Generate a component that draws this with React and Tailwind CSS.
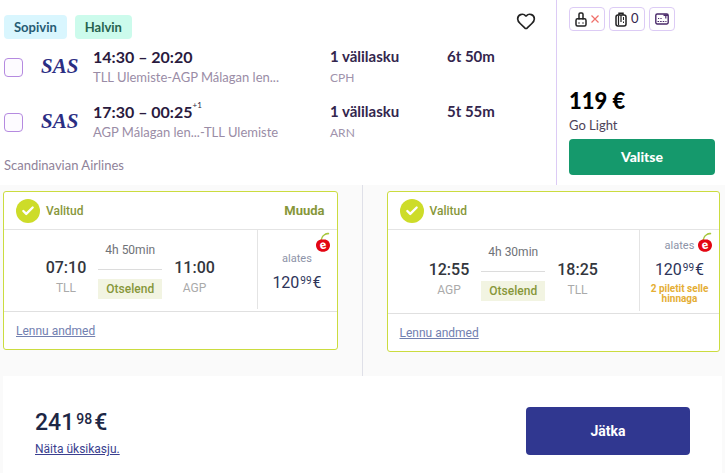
import React from 'react';
import { Check, Heart } from 'lucide-react';

const legs = [
  { id: 'out', time: '14:30 – 20:20', plus: '', route: 'TLL Ulemiste-AGP Málagan len...', stops: '1 välilasku', via: 'CPH', duration: '6t 50m' },
  { id: 'back', time: '17:30 – 00:25', plus: '+1', route: 'AGP Málagan len...-TLL Ulemiste', stops: '1 välilasku', via: 'ARN', duration: '5t 55m' },
];

const BackpackIcon = () => (
  <svg className="w-3 h-[15px]" viewBox="0 0 12 15" fill="none" stroke="#222" strokeWidth="1.5">
    <path d="M4 7.5V2.2Q4 1 5.2 1h1.6Q8 1 8 2.2V7.5" />
    <path d="M4 6.8H2.6Q1 6.8 1 8.4V12.5Q1 14 2.5 14h7Q11 14 11 12.5V8.4Q11 6.8 9.4 6.8H8" />
    <path d="M4 6.8h4" />
    <path d="M3.2 11h1.6M7.2 11h1.6" strokeWidth="1.2" />
  </svg>
);

const SuitcaseIcon = () => (
  <svg className="w-3 h-[15px]" viewBox="0 0 12 15" fill="none" stroke="#222" strokeWidth="1.5">
    <path d="M4 3V1.2h4V3" />
    <rect x="1" y="3" width="10" height="11" rx="2" />
    <path d="M3.5 3.5v9.5M6 3v7" strokeWidth="1.2" />
    <path d="M8.5 5v3M8.5 9.5v1.5" strokeWidth="1" />
  </svg>
);

const CardIcon = () => (
  <svg className="w-3.5 h-3" viewBox="0 0 14 12" fill="none" stroke="#4a2a6a" strokeWidth="1.4">
    <rect x=".8" y="1" width="12.4" height="10" rx="1.4" />
    <path d="M8.5 2.2h4.500" strokeWidth="1.6" />
    <path d="M10.8 3v2.600" strokeWidth="1.2" />
    <path d="M3 5.500h1.200M5.400 5.500h1.200" strokeWidth="1" />
    <path d="M2.500 8.500h9" strokeWidth="1" strokeDasharray="1.600 1" />
  </svg>
);

const Cherry = () => (
  <svg className="absolute top-0.5 right-1.5 w-4 h-[21px]" viewBox="0 0 16 21" fill="none">
    <path d="M6.3 8.5C6.4 4.5 8.5 2 14 1.6" stroke="#a5c639" strokeWidth="1.4" />
    <path d="M8.3 3.6C9.8.8 12.4.4 14.6 1.3 12.6 1.9 10.6 2.2 8.3 3.6z" fill="#a5c639" />
    <path d="M8 7.6c3.9-.7 7 1.9 7 5.6S12 19.8 8 19.8 1 16.9 1 13.2s3.1-6.3 7-5.6z" fill="#e30613" />
    <text x="8" y="17" textAnchor="middle" fill="#fff" fontSize="12" fontWeight="700" fontFamily="Roboto, sans-serif" transform="rotate(-12 8 14)">e</text>
  </svg>
);

const Chip = ({ children }) => (
  <div className="flex items-center justify-center gap-1 h-6 px-[5px] rounded border border-[#dccbf5]">{children}</div>
);

function Leg({ leg }) {
  return (
    <div className="flex items-center">
      <input
        type="checkbox"
        id={leg.id}
        aria-label={leg.time}
        className="appearance-none shrink-0 w-[19px] h-[19px] rounded border border-[#b58ae0] bg-[#fdfbff]"
      />
      <label htmlFor={leg.id} className="w-[70px] pb-0.5 pl-[18px] font-[Liberation_Serif,serif] font-bold italic text-[21px] leading-5 text-[#2b2e83]">
        SAS
      </label>
      <div className="flex-1 grid grid-cols-[237px_117px_1fr] whitespace-nowrap">
        <div>
          <div className="flex text-base leading-[21px] font-bold text-[#2a1a3e]">
            {leg.time}
            {leg.plus && <sup className="top-0 text-[8px] leading-2 font-normal">{leg.plus}</sup>}
          </div>
          <div className="text-[13px] leading-[21px] text-[#9a8ca6]">{leg.route}</div>
        </div>
        <div>
          <div className="text-[15px] leading-[21px] font-bold text-[#33264d]">{leg.stops}</div>
          <div className="text-[12px] leading-[21px] text-[#a093ac]">{leg.via}</div>
        </div>
        <div className="text-[15px] leading-[21px] font-bold text-[#33264d]">{leg.duration}</div>
      </div>
    </div>
  );
}

function Stop({ time, code }) {
  return (
    <div className="pt-4 text-center">
      <div className="text-base leading-5 font-medium text-[#33363d]">{time}</div>
      <div className="text-[12px] leading-5 text-[#aaa]">{code}</div>
    </div>
  );
}

function FlightCard({ from, to, duration, change, note }) {
  return (
    <div className="rounded-[3px] border border-[#cbdc3f] bg-white">
      <div className="flex items-center gap-1.5 h-[38px] px-3 border-b border-[#e4e4e4] text-[12px] font-medium text-[#87973a]">
        <span className="flex items-center justify-center w-6 h-6 rounded-full bg-[#cddc29]">
          <Check className="w-3.5 h-3.5 text-white" strokeWidth={4} />
        </span>
        <span>Valitud</span>
        {change && <button className="ml-auto text-[13px] font-bold">Muuda</button>}
      </div>
      <div className="flex border-b border-[#e0e0e0]">
        <div className={`flex-1 flex items-center justify-center gap-3 ${note ? 'py-3' : 'pt-2.5 pb-3'}`}>
          <Stop time={from.time} code={from.code} />
          <div className="w-16 text-center text-[12px] leading-5">
            <div className="text-[#6f7277]">{duration}</div>
            <div className="my-[9px] border-t border-[#dcdcdc]" />
            <div className="bg-[#f2f4e2] text-[#87973a] font-medium">Otselend</div>
          </div>
          <Stop time={to.time} code={to.code} />
        </div>
        <div className={`relative flex flex-col items-center justify-center w-20 mb-0.5 border-l border-[#e4e4e4] ${note ? '' : 'pt-2'}`}>
          <Cherry />
          <div className="text-[11px] leading-4 text-[#8d93a8]">alates</div>
          <div className="flex mt-1 mb-0.5 text-base leading-6 text-[#2d3459]">
            120<span className="mx-px text-[10px] leading-5">99</span>€
          </div>
          {note && <div className="px-2 text-center text-[10px] leading-[10px] font-bold text-[#e5ae35]">{note}</div>}
        </div>
      </div>
      <div className="flex items-center h-[37px] px-3">
        <a href="#" className="text-[12px] text-[#7280b0] underline">Lennu andmed</a>
      </div>
    </div>
  );
}

export default function App() {
  return (
    <div className="bg-white font-[Roboto,sans-serif]">
      <section className="flex font-[Lato,sans-serif]">
        <div className="flex-1 pl-1 pt-[11px] pb-2.5">
          <div className="flex items-start gap-2 pr-5 text-[13px] font-bold">
            <span className="h-6 mt-1 px-2.5 leading-6 rounded bg-[#d9f6fe] text-[#265b73]">Sopivin</span>
            <span className="h-6 mt-1 px-2.5 leading-6 rounded bg-[#ccfbec] text-[#27634f]">Halvin</span>
            <button aria-label="Suosikki" className="ml-auto">
              <Heart className="w-5 h-5 text-[#222]" />
            </button>
          </div>
          <div className="flex flex-col gap-[13px] mt-[7px]">
            {legs.map((leg) => <Leg key={leg.id} leg={leg} />)}
          </div>
          <div className="mt-3 text-[13px] leading-5 text-[#8f8299]">Scandinavian Airlines</div>
        </div>
        <div className="flex flex-col w-[169px] pl-3 pr-2.5 pt-[7px] pb-2.5 border-l border-[#dccbf5]">
          <div className="flex gap-1">
            <Chip>
              <BackpackIcon />
              <svg className="w-2 h-2" viewBox="0 0 8 8" stroke="#f0706a" strokeWidth="1.2"><path d="M.5.5l7 7M7.5.5l-7 7" /></svg>
            </Chip>
            <Chip>
              <SuitcaseIcon />
              <span className="text-[13px] text-[#33264d]">0</span>
            </Chip>
            <Chip><CardIcon /></Chip>
          </div>
          <div className="mt-auto text-[22px] leading-7 font-black text-black">119 €</div>
          <div className="mb-1 text-[13px] leading-5 text-[#4e4459]">Go Light</div>
          <button className="h-9 rounded bg-[#15996c] text-white text-sm font-black">Valitse</button>
        </div>
      </section>

      <section className="grid grid-cols-2 bg-[#fafafa]">
        <div className="pl-[3px] pr-6 pt-1.5 pb-6 border-r border-[#dfe0e8]">
          <FlightCard
            from={{ time: '07:10', code: 'TLL' }}
            to={{ time: '11:00', code: 'AGP' }}
            duration="4h 50min"
            change
          />
        </div>
        <div className="pl-6 pr-[5px] pt-1.5 pb-6">
          <FlightCard
            from={{ time: '12:55', code: 'AGP' }}
            to={{ time: '18:25', code: 'TLL' }}
            duration="4h 30min"
            note="2 piletit selle hinnaga"
          />
        </div>
      </section>

      <section className="px-[3px] bg-[#fafafa]">
        <div className="flex items-start justify-between px-8 pt-[31px] pb-4 bg-white">
          <div>
            <div className="flex text-[23px] leading-8 font-medium text-[#1d2745]">
              241<span className="mx-0.5 text-sm leading-6">98</span>€
            </div>
            <a href="#" className="block text-[12px] leading-5 text-[#3b3f8f] underline">Näita üksikasju.</a>
          </div>
          <button className="w-[164px] h-12 rounded bg-[#303790] text-white text-sm font-bold">Jätka</button>
        </div>
      </section>
    </div>
  );
}
